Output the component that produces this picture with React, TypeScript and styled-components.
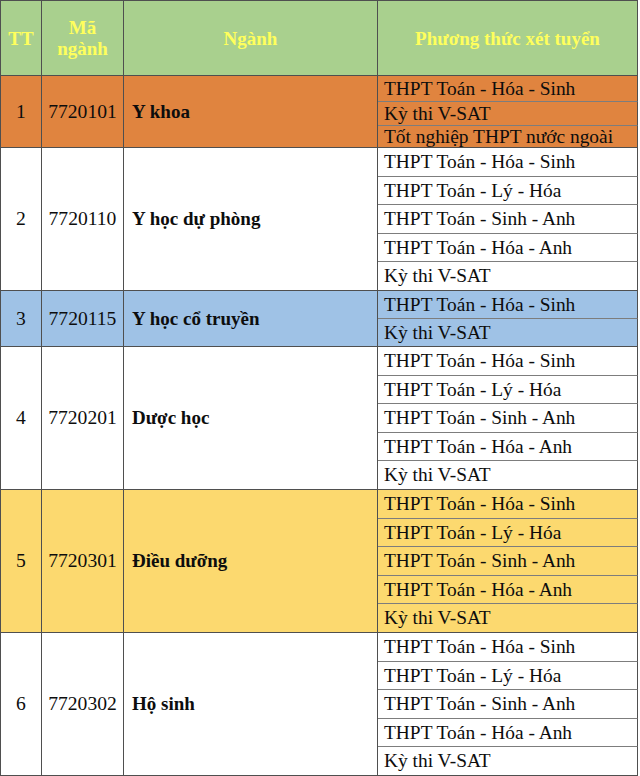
import React from 'react';
import styled, { createGlobalStyle } from 'styled-components';

const GlobalStyle = createGlobalStyle`
  html, body {
    margin: 0;
    padding: 0;
    background: #ffffff;
  }
  body {
    font-family: "Liberation Serif", "Times New Roman", serif;
  }
`;

type Group = {
  tt: number;
  code: string;
  name: string;
  bg: string;
  methods: string[];
  heights: number[];
};

const FIVE = [
  'THPT Toán - Hóa - Sinh',
  'THPT Toán - Lý - Hóa',
  'THPT Toán - Sinh - Anh',
  'THPT Toán - Hóa - Anh',
  'Kỳ thi V-SAT',
];
const FIVE_H = [29, 28, 29, 28, 29];

const groups: Group[] = [
  {
    tt: 1,
    code: '7720101',
    name: 'Y khoa',
    bg: '#e0843f',
    methods: ['THPT Toán - Hóa - Sinh', 'Kỳ thi V-SAT', 'Tốt nghiệp THPT nước ngoài'],
    heights: [26, 24, 22],
  },
  { tt: 2, code: '7720110', name: 'Y học dự phòng', bg: '#ffffff', methods: FIVE, heights: FIVE_H },
  {
    tt: 3,
    code: '7720115',
    name: 'Y học cổ truyền',
    bg: '#9fc2e6',
    methods: ['THPT Toán - Hóa - Sinh', 'Kỳ thi V-SAT'],
    heights: [28, 28],
  },
  { tt: 4, code: '7720201', name: 'Dược học', bg: '#ffffff', methods: FIVE, heights: FIVE_H },
  { tt: 5, code: '7720301', name: 'Điều dưỡng', bg: '#fcd96f', methods: FIVE, heights: FIVE_H },
  { tt: 6, code: '7720302', name: 'Hộ sinh', bg: '#ffffff', methods: FIVE, heights: FIVE_H },
];

const Table = styled.table`
  width: 637px;
  table-layout: fixed;
  border-collapse: separate;
  border-spacing: 0;
  border-top: 1px solid #4f4f4f;
  border-left: 1px solid #4f4f4f;
  font-size: 19.4px;
  color: #0d0d0d;
`;

const HeadRow = styled.tr`
  height: 75px;
`;

const HeadCell = styled.th`
  background: #a9d08e;
  color: #ffff5c;
  font-weight: bold;
  font-size: 19px;
  line-height: 21px;
  text-align: center;
  vertical-align: middle;
  padding: 0 2px;
  border-right: 1px solid #4f4f4f;
  border-bottom: 1px solid #4f4f4f;
`;

const Row = styled.tr<{ $h: number }>`
  height: ${(p) => p.$h}px;
`;

const MainCell = styled.td<{ $bg: string; $align?: string; $bold?: boolean }>`
  background: ${(p) => p.$bg};
  text-align: ${(p) => p.$align || 'center'};
  font-weight: ${(p) => (p.$bold ? 'bold' : 'normal')};
  font-size: ${(p) => (p.$bold ? '19px' : '19.6px')};
  vertical-align: middle;
  padding: 0 0 0 ${(p) => (p.$align === 'left' ? '8px' : '0')};
  border-right: 1px solid #4f4f4f;
  border-bottom: 1px solid #4f4f4f;
  white-space: nowrap;
`;

const MethodCell = styled.td<{ $bg: string; $last: boolean }>`
  background: ${(p) => p.$bg};
  vertical-align: middle;
  padding: 0 0 0 6px;
  line-height: 1;
  white-space: nowrap;
  border-right: 1px solid #4f4f4f;
  border-bottom: 1px solid ${(p) => (p.$last ? '#4f4f4f' : '#7d7d7d')};
`;

function App() {
  return (
    <>
      <GlobalStyle />
      <Table>
        <colgroup>
          <col style={{ width: 41 }} />
          <col style={{ width: 82 }} />
          <col style={{ width: 254 }} />
          <col style={{ width: 260 }} />
        </colgroup>
        <thead>
          <HeadRow>
            <HeadCell>TT</HeadCell>
            <HeadCell>
              Mã
              <br />
              ngành
            </HeadCell>
            <HeadCell>Ngành</HeadCell>
            <HeadCell>Phương thức xét tuyển</HeadCell>
          </HeadRow>
        </thead>
        <tbody>
          {groups.map((g) =>
            g.methods.map((m, i) => (
              <Row key={`${g.tt}-${i}`} $h={g.heights[i]}>
                {i === 0 && (
                  <>
                    <MainCell $bg={g.bg} rowSpan={g.methods.length}>
                      {g.tt}
                    </MainCell>
                    <MainCell $bg={g.bg} rowSpan={g.methods.length}>
                      {g.code}
                    </MainCell>
                    <MainCell $bg={g.bg} $align="left" $bold rowSpan={g.methods.length}>
                      {g.name}
                    </MainCell>
                  </>
                )}
                <MethodCell $bg={g.bg} $last={i === g.methods.length - 1}>
                  {m}
                </MethodCell>
              </Row>
            ))
          )}
        </tbody>
      </Table>
    </>
  );
}

export default App;
